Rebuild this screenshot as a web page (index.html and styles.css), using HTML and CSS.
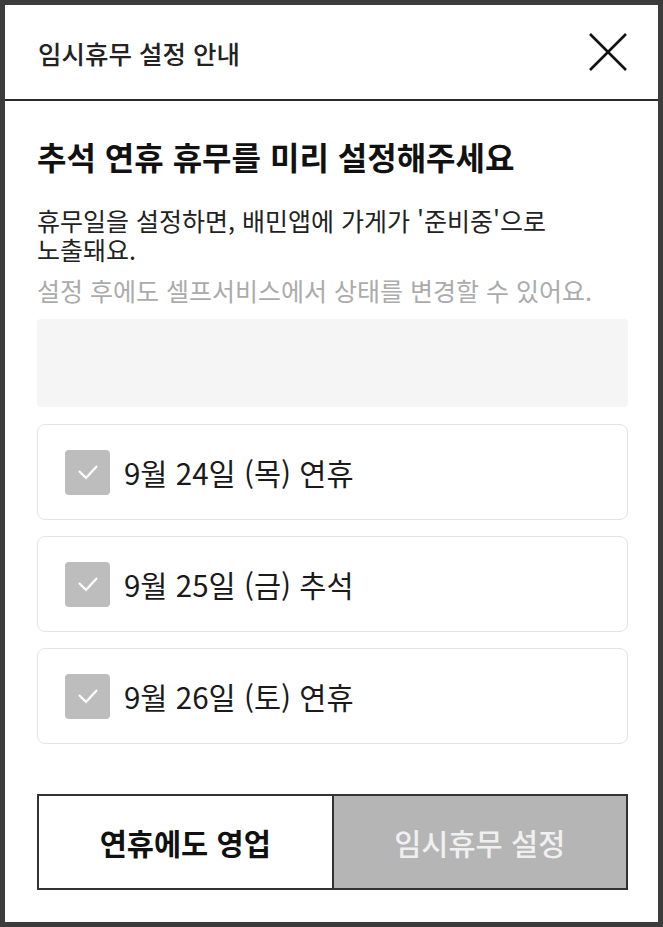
FILE: index.html
```html
<!DOCTYPE html>
<html lang="ko">
<head>
<meta charset="utf-8">
<link rel="stylesheet" href="styles.css">
</head>
<body>
<div class="frame">
  <header class="head">
    <h1 class="head-title">임시휴무 설정 안내</h1>
    <svg class="close" width="40" height="40" viewBox="0 0 40 40" aria-label="닫기">
      <path d="M2 2 L38 38 M38 2 L2 38" stroke="#111" stroke-width="2.6" fill="none"/>
    </svg>
  </header>
  <main class="body">
    <h2 class="heading">추석 연휴 휴무를 미리 설정해주세요</h2>
    <p class="desc">휴무일을 설정하면, 배민앱에 가게가 '준비중'으로<br>노출돼요.</p>
    <p class="note">설정 후에도 셀프서비스에서 상태를 변경할 수 있어요.</p>
    <div class="blank"></div>
    <ul class="days">
      <li class="day">
        <span class="check"><svg width="22" height="16" viewBox="0 0 22 16"><path d="M2 7 L9 14 L20 2" stroke="#fff" stroke-width="2.2" fill="none"/></svg></span>
        <span class="day-text">9월 24일 (목) 연휴</span>
      </li>
      <li class="day">
        <span class="check"><svg width="22" height="16" viewBox="0 0 22 16"><path d="M2 7 L9 14 L20 2" stroke="#fff" stroke-width="2.2" fill="none"/></svg></span>
        <span class="day-text">9월 25일 (금) 추석</span>
      </li>
      <li class="day">
        <span class="check"><svg width="22" height="16" viewBox="0 0 22 16"><path d="M2 7 L9 14 L20 2" stroke="#fff" stroke-width="2.2" fill="none"/></svg></span>
        <span class="day-text">9월 26일 (토) 연휴</span>
      </li>
    </ul>
    <div class="actions">
      <button class="btn btn-open">연휴에도 영업</button>
      <button class="btn btn-close">임시휴무 설정</button>
    </div>
  </main>
</div>
</body>
</html>
```
FILE: styles.css
```css
* { box-sizing: border-box; }
html, body { margin: 0; padding: 0; background: #fff; }
body { font-family: "Noto Sans CJK KR", "Noto Sans", sans-serif; color: #111; }
.frame {
  width: 663px;
  height: 927px;
  border: 5px solid #3c3c3c;
  background: #fff;
}
.head {
  height: 96px;
  border-bottom: 2px solid #2a2a2a;
  display: flex;
  align-items: center;
  justify-content: space-between;
  padding: 0 30px 0 33px;
}
.head-title {
  margin: 0;
  font-size: 25.5px;
  font-weight: 500;
  color: #222;
}
.close { display: block; }
.body { padding: 0 30px 0 32px; }
.heading {
  margin: 35px 0 0;
  font-size: 32px;
  line-height: 40px;
  font-weight: 700;
  color: #111;
}
.desc {
  margin: 30px 0 0;
  font-size: 25px;
  line-height: 29px;
  color: #222;
}
.note {
  margin: 12px 0 0;
  font-size: 25px;
  line-height: 29px;
  color: #ababab;
}
.blank {
  margin-top: 14px;
  height: 88px;
  background: #f5f5f5;
  border-radius: 4px;
}
.days {
  list-style: none;
  margin: 17px 0 0;
  padding: 0;
  display: flex;
  flex-direction: column;
  gap: 16px;
}
.day {
  height: 96px;
  border: 1.5px solid #e3e3e3;
  border-radius: 8px;
  display: flex;
  align-items: center;
  padding-left: 27px;
  gap: 14px;
}
.check {
  width: 45px;
  height: 45px;
  border-radius: 4px;
  background: #bdbdbd;
  display: flex;
  align-items: center;
  justify-content: center;
}
.check svg { display: block; }
.day-text {
  font-size: 29.5px;
  color: #1a1a1a;
}
.actions {
  margin-top: 50px;
  display: flex;
}
.btn {
  flex: 1;
  height: 96px;
  border: 2px solid #333;
  font-family: inherit;
  font-size: 29.5px;
  padding: 0;
}
.btn-open {
  background: #fff;
  color: #111;
  font-weight: 700;
}
.btn-close {
  background: #b5b5b5;
  color: #f0f0f0;
  font-weight: 500;
  border-left: 0;
}
```
